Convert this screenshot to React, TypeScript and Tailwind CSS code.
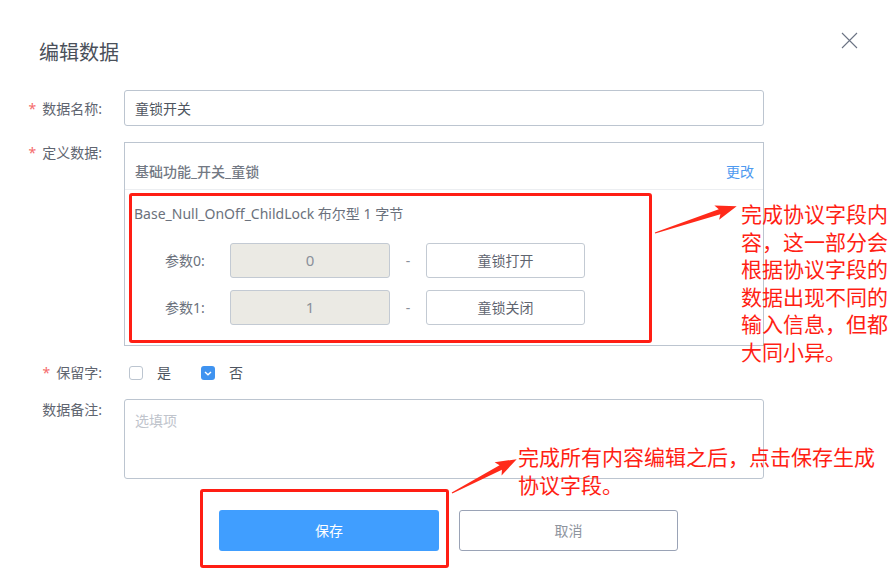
import React from "react";

const FONT = '"Noto Sans", "Noto Sans CJK SC", sans-serif';

const Arrow: React.FC<{ x: number; y: number; len: number; angle: number }> = ({ x, y, len, angle }) => (
  <g transform={`translate(${x} ${y}) rotate(${angle})`}>
    <polygon
      fill="#ff2a1a"
      points={`0,-0.6 ${len - 18},-2.6 ${len - 21},-7.5 ${len},0 ${len - 21},7.5 ${len - 18},2.6 0,0.6`}
    />
  </g>
);

const Label: React.FC<{ text: string; required?: boolean; className?: string }> = ({ text, required, className }) => (
  <div className={`w-[124px] shrink-0 pr-[22px] text-right text-[14px] text-[#5f6570] ${className ?? ""}`}>
    {required && <span className="mr-[6px] text-[#f56c6c]">*</span>}
    {text}
  </div>
);

const ParamRow: React.FC<{ name: string; value: string; desc: string }> = ({ name, value, desc }) => (
  <div className="flex items-center">
    <div className="w-[105px] pl-[40px] text-[14px] text-[#6b717c]">{name}</div>
    <div className="flex h-[35px] w-[160px] items-center justify-center rounded-[3px] border border-[#c3cad3] bg-[#ebeae4] text-[15px] text-[#8a909a]">
      {value}
    </div>
    <div className="w-[36px] text-center text-[14px] text-[#8a909a]">-</div>
    <div className="flex h-[35px] w-[159px] items-center justify-center rounded-[3px] border border-[#c3cad3] bg-white text-[14px] text-[#5f6570]">
      {desc}
    </div>
  </div>
);

export default function App() {
  return (
    <div className="relative h-[587px] w-[896px] overflow-hidden bg-white" style={{ fontFamily: FONT }}>
      <div className="flex items-start justify-between pl-[39px] pr-[38px] pt-[39px]">
        <h1 className="text-[20px] leading-[28px] text-[#4a505a]">编辑数据</h1>
        <svg width="17" height="17" viewBox="0 0 17 17" className="mt-[-7px]">
          <path d="M1 1 L16 16 M16 1 L1 16" stroke="#6b7384" strokeWidth="1.1" />
        </svg>
      </div>

      <div className="mt-[23px] flex flex-col">
        <div className="flex items-center">
          <Label text="数据名称:" required />
          <div className="flex h-[36px] w-[640px] items-center rounded-[3px] border border-[#bcc5d0] px-[10px] text-[14px] text-[#4e5560]">
            童锁开关
          </div>
        </div>

        <div className="mt-[16px] flex items-start">
          <Label text="定义数据:" required />
          <div className="h-[204px] w-[640px] border border-[#bcc5d0]">
            <div className="flex h-[47px] items-center justify-between border-b border-[#eceef1] pl-[10px] pr-[9px] pt-[11px]">
              <span className="text-[14px] font-medium text-[#737984]">基础功能_开关_童锁</span>
              <span className="text-[14px] text-[#4d9af0]">更改</span>
            </div>
            <div className="pl-[9px] pt-[13px] text-[14px] text-[#6b717c]">
              Base_Null_OnOff_ChildLock 布尔型 1 字节
            </div>
            <div className="mt-[19px] flex flex-col gap-[12px]">
              <ParamRow name="参数0:" value="0" desc="童锁打开" />
              <ParamRow name="参数1:" value="1" desc="童锁关闭" />
            </div>
          </div>
        </div>

        <div className="mt-[16px] flex items-center">
          <Label text="保留字:" required />
          <div className="flex items-center text-[14px] text-[#4e5560]">
            <span className="ml-[5px] h-[14px] w-[14px] rounded-[3px] border border-[#bcc5d0] bg-white" />
            <span className="ml-[14px]">是</span>
            <span className="ml-[30px] flex h-[14px] w-[14px] items-center justify-center rounded-[3px] bg-[#3f93f0]">
              <svg width="8" height="6" viewBox="0 0 8 6">
                <path d="M1 2 L4 4.8 L7 2" fill="none" stroke="#fff" strokeWidth="1.4" />
              </svg>
            </span>
            <span className="ml-[14px]">否</span>
          </div>
        </div>

        <div className="mt-[16px] flex items-start">
          <Label text="数据备注:" />
          <div className="h-[80px] w-[640px] rounded-[3px] border border-[#bcc5d0] px-[10px] pt-[10px] text-[14px] text-[#c0c4cc]">
            选填项
          </div>
        </div>

        <div className="mt-[31px] flex pl-[219px]">
          <button className="h-[41px] w-[220px] rounded-[3px] bg-[#409eff] text-[14px] text-white">保存</button>
          <button className="ml-[20px] h-[41px] w-[219px] rounded-[3px] border border-[#9aa3b6] bg-white text-[14px] text-[#8e949e]">
            取消
          </button>
        </div>
      </div>

      {/* annotation overlays */}
      <div className="absolute left-[129px] top-[193px] h-[150px] w-[523px] rounded-[3px] border-[3px] border-[#ff1e14]" />
      <div className="absolute left-[200px] top-[489px] h-[79px] w-[249px] rounded-[3px] border-[3px] border-[#ff1e14]" />
      <svg className="pointer-events-none absolute left-0 top-0" width="896" height="587">
        <Arrow x={655} y={233} len={86} angle={-18.2} />
        <Arrow x={452} y={493} len={73} angle={-27.6} />
      </svg>
      <div className="absolute left-[741px] top-[201px] text-[21px] leading-[27.6px] text-[#ff1e14]">
        <div>完成协议字段内</div>
        <div>容，这一部分会</div>
        <div>根据协议字段的</div>
        <div>数据出现不同的</div>
        <div>输入信息，但都</div>
        <div>大同小异。</div>
      </div>
      <div className="absolute left-[518px] top-[443px] text-[21px] leading-[28px] text-[#ff1e14]">
        <div>完成所有内容编辑之后，点击保存生成</div>
        <div>协议字段。</div>
      </div>
    </div>
  );
}
